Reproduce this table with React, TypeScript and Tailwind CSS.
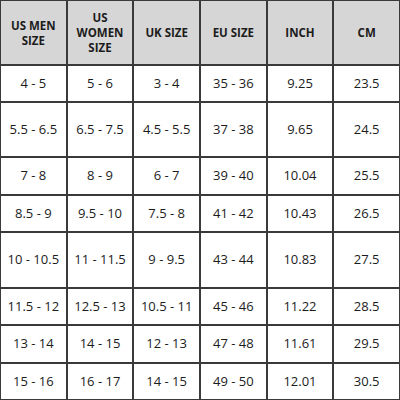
const headers = ["US MEN\nSIZE", "US\nWOMEN\nSIZE", "UK SIZE", "EU SIZE", "INCH", "CM"];

const rows = [
  ["4 - 5", "5 - 6", "3 - 4", "35 - 36", "9.25", "23.5"],
  ["5.5 - 6.5", "6.5 - 7.5", "4.5 - 5.5", "37 - 38", "9.65", "24.5"],
  ["7 - 8", "8 - 9", "6 - 7", "39 - 40", "10.04", "25.5"],
  ["8.5 - 9", "9.5 - 10", "7.5 - 8", "41 - 42", "10.43", "26.5"],
  ["10 - 10.5", "11 - 11.5", "9 - 9.5", "43 - 44", "10.83", "27.5"],
  ["11.5 - 12", "12.5 - 13", "10.5 - 11", "45 - 46", "11.22", "28.5"],
  ["13 - 14", "14 - 15", "12 - 13", "47 - 48", "11.61", "29.5"],
  ["15 - 16", "16 - 17", "14 - 15", "49 - 50", "12.01", "30.5"],
];

const App = () => {
  return (
    <div
      className="w-[400px] h-[400px] bg-[#3a3a3a] p-px grid grid-cols-6 grid-rows-[63px_35px_53px_36px_35px_54px_35px_36px_35px] gap-[2px] text-[#1c1c1c]"
      style={{ fontFamily: '"Open Sans", "Noto Sans", sans-serif' }}
    >
      {/* header */}
      {headers.map((h) => (
        <div key={h} className="bg-[#d6d6d6] flex items-center justify-center text-center font-bold text-[11.5px] leading-[15px] whitespace-pre-line">
          {h}
        </div>
      ))}
      {/* body */}
      {rows.map((row, i) =>
        row.map((cell, j) => (
          <div key={`${i}-${j}`} className="bg-white flex items-center justify-center text-[13px]">
            {cell}
          </div>
        ))
      )}
    </div>
  );
};

export default App;
